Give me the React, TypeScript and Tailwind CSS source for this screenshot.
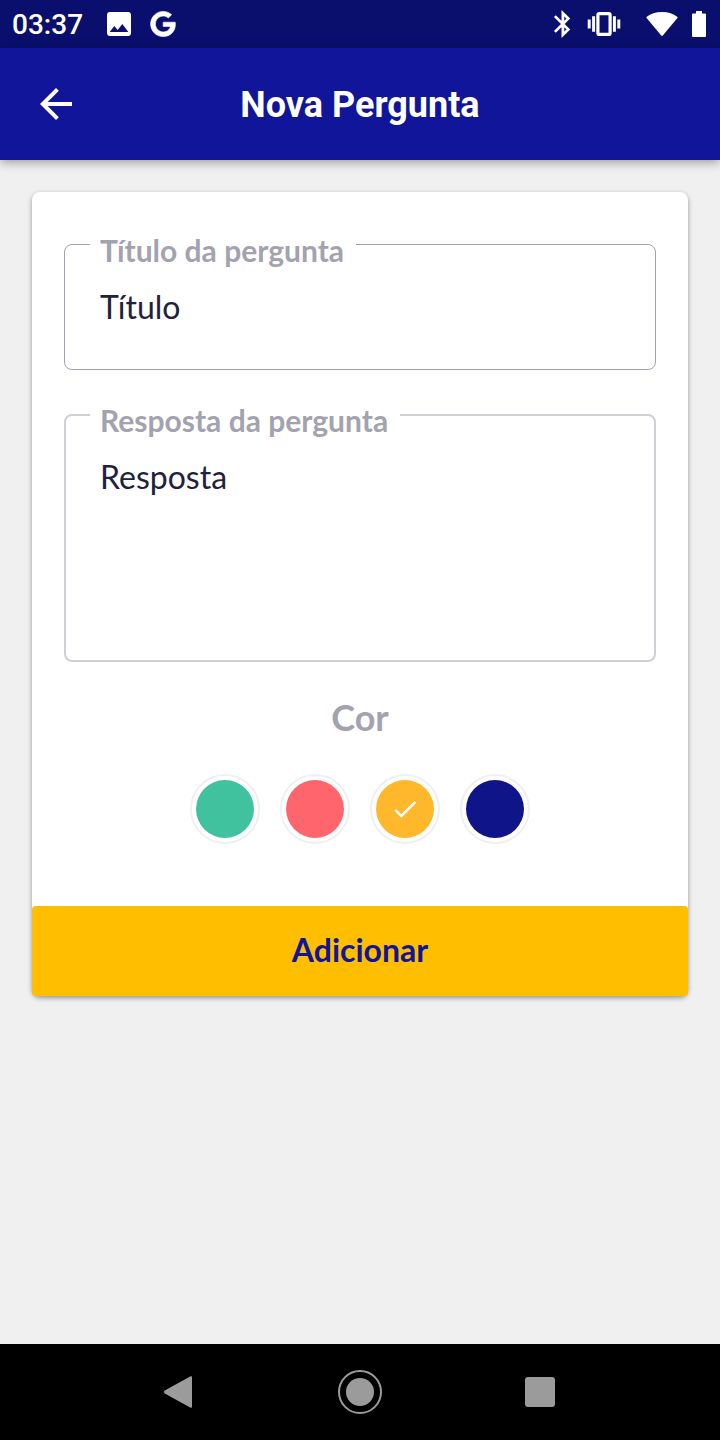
import { MdArrowBack, MdCheck, MdImage } from "react-icons/md";
import { FaGoogle } from "react-icons/fa";

const colors = [
  { name: "Verde", fill: "bg-[#40c29e]" },
  { name: "Vermelho", fill: "bg-[#ff656c]" },
  { name: "Amarelo", fill: "bg-[#ffb72b]" },
  { name: "Azul", fill: "bg-[#0f1589]" },
];

function StatusBar() {
  return (
    <div className="flex h-12 items-center justify-between bg-[#0a0f6e] pl-3 pr-3.5 text-white">
      <div className="flex items-center">
        <span className="pt-0.5 font-['Roboto',sans-serif] text-[28px] leading-8 font-medium">03:37</span>
        <MdImage className="ml-5 size-8" />
        <FaGoogle className="ml-[15px] size-[26px] overflow-visible stroke-current stroke-[12]" />
      </div>
      <div className="flex items-center">
        <svg viewBox="0 0 24 24" className="size-[30px]" fill="none" stroke="currentColor" strokeWidth="2.200" aria-hidden="true">
          <path d="M5.500 5.700 16.200 16.300 11.900 20.500V3.500l4.300 4.200L5.500 18.300" />
        </svg>
        <svg viewBox="0 0 34 24" className="ml-[9px] h-6 w-[34px]" fill="none" stroke="currentColor" strokeWidth="3" aria-hidden="true">
          <rect x="10.900" y="1.600" width="12.200" height="20.800" rx="1.200" strokeWidth="3.200" />
          <path d="M6.600 4.300v15.400M27.400 4.300v15.400M2.200 7.500v9M31.800 7.500v9" />
        </svg>
        <svg viewBox="0 0 32 24" className="ml-[25px] h-6 w-8" fill="currentColor" aria-hidden="true">
          <path d="M16 0C9.800 0 4.500 2 .8 4.700c-.5.400-.5.900-.2 1.300L15.200 23.500c.5.600 1.100.600 1.600 0L31.400 6c.3-.4.300-.9-.2-1.300C27.500 2 22.200 0 16 0z" />
        </svg>
        <svg viewBox="0 0 14 26" className="ml-3.5 h-[26px] w-3.5" fill="currentColor" aria-hidden="true">
          <path d="M4 0h6v2.600h3a1 1 0 0 1 1 1V25a1 1 0 0 1-1 1H1a1 1 0 0 1-1-1V3.600a1 1 0 0 1 1-1h3z" />
        </svg>
      </div>
    </div>
  );
}

function Header() {
  return (
    <header className="relative z-10 grid h-28 grid-cols-[1fr_auto_1fr] items-center bg-[#101599] px-8 text-white shadow-[0_2px_10px_rgba(0,0,0,0.38)]">
      <button type="button" aria-label="Voltar" className="size-12">
        <MdArrowBack className="size-12" />
      </button>
      <h1 className="pt-0.5 font-['Roboto',sans-serif] text-4xl font-bold">Nova Pergunta</h1>
    </header>
  );
}

function ColorPicker() {
  return (
    <fieldset className="mt-8">
      <legend className="mx-auto text-4xl leading-[46px] font-bold text-[#a3a2af]">Cor</legend>
      <div className="mt-[34px] flex justify-center gap-5">
        {colors.map((color) => (
          <label key={color.name} className="relative flex size-[70px]">
            <input
              type="radio"
              name="cor"
              aria-label={color.name}
              defaultChecked={color.name === "Amarelo"}
              className={`peer size-full appearance-none rounded-full border-2 border-[#f0f0f0] bg-clip-content p-1 ${color.fill}`}
            />
            <MdCheck className="pointer-events-none absolute inset-5 hidden size-[30px] text-white peer-checked:block" />
          </label>
        ))}
      </div>
    </fieldset>
  );
}

function NavigationBar() {
  return (
    <nav className="flex h-24 bg-black px-[12.5%] text-[#9b9b9b]">
      <button type="button" aria-label="Voltar" className="flex flex-1 items-center justify-center">
        <svg viewBox="0 0 32 32" className="size-8" fill="currentColor">
          <path d="M.8 14.600 26.600.300C27.300 0 28 .300 28 1v30c0 .7-.7 1-1.400.700L.8 17.400c-1-.6-1-2.200 0-2.800z" />
        </svg>
      </button>
      <button type="button" aria-label="Início" className="flex flex-1 items-center justify-center">
        <span className="flex size-11 items-center justify-center rounded-full border-2 border-current">
          <span className="size-7 rounded-full bg-current" />
        </span>
      </button>
      <button type="button" aria-label="Recentes" className="flex flex-1 items-center justify-center">
        <span className="size-[30px] rounded-[3px] bg-current" />
      </button>
    </nav>
  );
}

export default function App() {
  return (
    <div className="flex min-h-screen flex-col bg-[#f0f0f0] font-['Lato',sans-serif]">
      <StatusBar />
      <Header />
      <main className="flex-1 p-8">
        <form className="rounded-lg bg-white pt-[52px] shadow-[0_2px_5px_rgba(0,0,0,0.38)]">
          <div className="px-8">
            <div className="relative">
              <label
                htmlFor="titulo"
                className="absolute -top-3 left-[26px] bg-white pr-3 pl-2.5 text-3xl leading-9 font-bold text-[#a3a2af]"
              >
                Título da pergunta
              </label>
              <input
                id="titulo"
                defaultValue="Título"
                className="block h-[126px] w-full rounded-lg border border-[#a1a0b0] px-[35px] pb-0.5 text-[32px] text-[#22213b] outline-none"
              />
            </div>
            <div className="relative mt-11">
              <label
                htmlFor="resposta"
                className="absolute -top-3 left-[26px] bg-white pr-3 pl-2.5 text-3xl leading-9 font-bold text-[#a3a2af]"
              >
                Resposta da pergunta
              </label>
              <textarea
                id="resposta"
                defaultValue="Resposta"
                className="block h-[248px] w-full resize-none rounded-lg border-2 border-[#d0cfd5] px-[34px] pt-10 text-[32px] leading-[42px] text-[#22213b] outline-none"
              />
            </div>
            <ColorPicker />
          </div>
          <button
            type="button"
            className="mt-[62px] h-[90px] w-full rounded-[4px] bg-[#ffbf00] pb-0.5 text-[32px] font-bold text-[#101599]"
          >
            Adicionar
          </button>
        </form>
      </main>
      <NavigationBar />
    </div>
  );
}
